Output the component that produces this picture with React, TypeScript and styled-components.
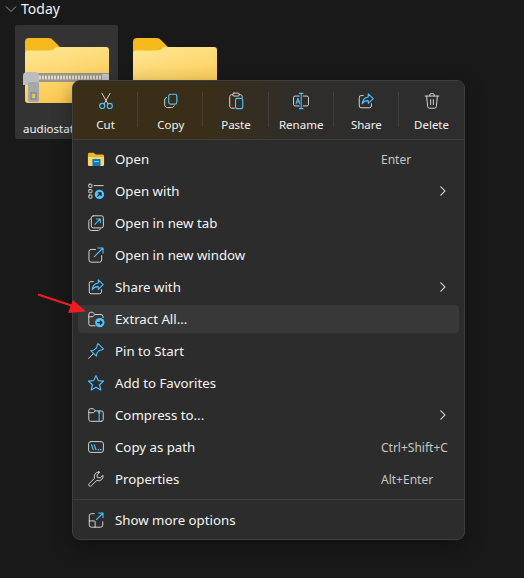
import { FC, ReactNode } from "react";
import styled, { createGlobalStyle } from "styled-components";

const GlobalStyle = createGlobalStyle`
  html, body {
    margin: 0;
    background: #191919;
    font-family: "Noto Sans", "Open Sans", sans-serif;
    overflow: hidden;
  }
`;

const BLUE = "#4cc2ff";
const GREY = "#d4d4d4";

const Ico: FC<{ children: ReactNode }> = ({ children }) => (
  <IconSvg viewBox="0 0 20 20" fill="none" stroke={GREY} strokeWidth="1.1" strokeLinecap="round" strokeLinejoin="round">
    {children}
  </IconSvg>
);

const CutIcon = () => (
  <Ico>
    <path d="M5.500 1.500 12 13M14.500 1.500 8 13" />
    <circle cx="5.800" cy="15.500" r="2.800" stroke={BLUE} strokeWidth="1.300" />
    <circle cx="14.200" cy="15.500" r="2.800" stroke={BLUE} strokeWidth="1.300" />
  </Ico>
);
const CopyIcon = () => (
  <Ico>
    <rect x="7.500" y="2.500" width="9" height="11" rx="2" stroke={BLUE} strokeWidth="1.300" />
    <path d="M5 6.200C3.800 6.500 3 7.400 3 8.700v5.600C3 16 4.200 17.300 6 17.300h4.800c1.200 0 2.200-.8 2.600-1.900" />
  </Ico>
);
const PasteIcon = () => (
  <Ico>
    <path d="M6.500 3H5.200C3.900 3 3 4 3 5.200v10.600C3 17 3.900 18 5.200 18h3" />
    <path d="M13.500 3h1.300c1.200 0 2.200 1 2.200 2.200V6" />
    <rect x="6.500" y="1.200" width="7" height="3.300" rx="1.200" />
    <rect x="9.500" y="7" width="8" height="11.500" rx="1.800" stroke={BLUE} strokeWidth="1.300" />
  </Ico>
);
const RenameIcon = () => (
  <Ico>
    <path d="M8 4.500H3.500A1.800 1.800 0 0 0 1.700 6.300v7.400a1.800 1.800 0 0 0 1.800 1.800H8M12.500 4.500h4a1.800 1.800 0 0 1 1.800 1.800v7.400a1.800 1.800 0 0 1-1.800 1.800h-4" />
    <path d="M8.200 1.500h4M8.200 18.500h4M10.200 1.500v17" stroke={BLUE} strokeWidth="1.200" />
    <path d="M4.500 13 6.600 7l2.100 6M5.200 11h2.800" stroke={BLUE} strokeWidth="1.200" />
  </Ico>
);
const ShareIcon = () => (
  <Ico>
    <path d="M7 4H4.500A2 2 0 0 0 2.500 6v9.500a2 2 0 0 0 2 2H14a2 2 0 0 0 2-2V13" />
    <path d="M12.500 2 18 7.400l-5.500 5.200V9.600C9.500 9.400 7.500 10.400 5.800 13c.3-4.200 2.600-6.800 6.700-7.400V2Z" stroke={BLUE} strokeWidth="1.200" />
  </Ico>
);
const DeleteIcon = () => (
  <Ico>
    <path d="M2.500 4.500h15M7.500 4.500V3.200A1.500 1.500 0 0 1 9 1.800h2a1.500 1.500 0 0 1 1.500 1.400v1.300" />
    <path d="M4 4.500 5.200 16.200A2 2 0 0 0 7.200 18h5.600a2 2 0 0 0 2-1.800L16 4.500" />
    <path d="M8.500 8.500v5.500M11.500 8.500v5.500" />
  </Ico>
);
const OpenIcon = () => (
  <IconSvg viewBox="0 0 20 20">
    <path d="M1 5A1.800 1.800 0 0 1 2.800 3h4.500l2.200 2h7.700A1.800 1.800 0 0 1 19 6.800V7H1Z" fill="#f5b81c" />
    <path d="M1 7h18v9a1.800 1.800 0 0 1-1.800 1.800H2.800A1.800 1.800 0 0 1 1 16Z" fill="#fcd667" />
    <rect x="6" y="10" width="9" height="7.800" rx="0.800" fill="#0f78c4" />
    <rect x="8" y="12.300" width="5" height="1.200" fill="#7fd0fb" />
  </IconSvg>
);
const OpenWithIcon = () => (
  <Ico>
    <rect x="2" y="2.500" width="3.500" height="3.500" rx="0.500" />
    <rect x="2" y="8.500" width="3.500" height="3.500" rx="0.500" />
    <rect x="2" y="14.500" width="3.500" height="3.500" rx="0.500" />
    <path d="M8 4h10" />
    <circle cx="13.800" cy="13.800" r="5.200" fill={BLUE} stroke="none" />
    <path d="M12 15.600l3.400-3.400M12.700 12h2.900v2.900" stroke="#1d1d1d" strokeWidth="1.300" />
  </Ico>
);
const NewTabIcon = () => (
  <Ico>
    <path d="M3.800 5.500C2.700 6 2 7 2 8.200v7.300A2.800 2.800 0 0 0 4.800 18.300h7.400c1.200 0 2.200-.7 2.600-1.800" />
    <rect x="4.800" y="2" width="13.400" height="13.400" rx="2.200" />
    <path d="M8.800 11.500 14.500 5.800M10.500 5.500h4.300v4.300" stroke={BLUE} strokeWidth="1.200" />
  </Ico>
);
const NewWindowIcon = () => (
  <Ico>
    <path d="M9.500 3.800H4.500A2.300 2.300 0 0 0 2.200 6.100v9.500a2.300 2.300 0 0 0 2.300 2.300H14a2.300 2.300 0 0 0 2.300-2.300v-5" />
    <path d="M8 12 17.500 2.500M12 2.200h5.800V8" stroke={BLUE} strokeWidth="1.200" />
  </Ico>
);
const ExtractIcon = () => (
  <Ico>
    <path d="M9 17.500H4.300a2.300 2.300 0 0 1-2.300-2.300V4.800a2.300 2.300 0 0 1 2.300-2.300h2.200l2.300 2.500h6.700a2.300 2.300 0 0 1 2.300 2.300v1.200" />
    <path d="M2 7.500h4.500l2.300-2.500" />
    <circle cx="14.200" cy="14" r="5.200" fill={BLUE} stroke="none" />
    <path d="M11.700 14h4.800M14.700 12l2 2-2 2" stroke="#1d1d1d" strokeWidth="1.300" />
  </Ico>
);
const PinIcon = () => (
  <Ico>
    <path d="M12.300 1.800 18.200 7.700 16.800 8.600 13.600 9.400 10.900 12.500 10.500 15.800 4.200 9.500 7.500 9.100 10.600 6.400 11.400 3.200Z" stroke={BLUE} strokeWidth="1.200" />
    <path d="M7 13 1.800 18.200" />
  </Ico>
);
const StarIcon = () => (
  <Ico>
    <path d="M10 1.800 12.500 7.300 18.400 7.900 14 11.900 15.300 17.800 10 14.800 4.700 17.800 6 11.900 1.600 7.900 7.500 7.300Z" stroke={BLUE} strokeWidth="1.300" />
  </Ico>
);
const CompressIcon = () => (
  <Ico>
    <path d="M16 17H4a2 2 0 0 1-2-2V5a2 2 0 0 1 2-2h3l2.300 2.500H16a2 2 0 0 1 2 2v7.500a2 2 0 0 1-2 2Z" />
    <path d="M2 7.500h5l2.300-2" />
    <path d="M13.500 5.500v11" stroke={BLUE} strokeWidth="1.300" strokeDasharray="1.500 1" />
    <rect x="12.400" y="5.500" width="2.200" height="3" fill={BLUE} stroke="none" />
  </Ico>
);
const PathIcon = () => (
  <Ico>
    <rect x="1.800" y="4" width="16.400" height="12" rx="2.500" />
    <path d="M5 7.500 7 13M8 7.500 10 13" stroke={BLUE} strokeWidth="1.300" />
    <path d="M12.500 13h.6M15 13h.6" stroke={BLUE} strokeWidth="1.400" />
  </Ico>
);
const WrenchIcon = () => (
  <Ico>
    <path d="M12.800 2.200a5 5 0 0 0-4.400 7L2.400 15.200a1.700 1.700 0 0 0 0 2.400 1.700 1.700 0 0 0 2.400 0l6-6a5 5 0 0 0 6.900-5.800L14.600 8.900 11.500 8.400 11.100 5.400 14.200 2.400a5 5 0 0 0-1.400-.2Z" />
  </Ico>
);
const MoreIcon = () => (
  <Ico>
    <path d="M8 3H4.800A2.300 2.300 0 0 0 2.500 5.300v10.400A2.300 2.300 0 0 0 4.800 18h10.400a2.300 2.300 0 0 0 2.300-2.300V12" />
    <path d="M2.500 11h5.700c.5 0 .8.300.8.800V18" />
    <path d="M10.500 9.500 17.500 2.500M13 2.300h4.800v4.800" stroke={BLUE} strokeWidth="1.200" />
  </Ico>
);

const FolderArt: FC<{ id: string; zipped?: boolean }> = ({ id, zipped }) => (
  <FolderSvg width="84" height="67" viewBox="0 0 84 67">
    <defs>
      <linearGradient id={id} x1="0" y1="0" x2="0.350" y2="1">
        <stop offset="0" stopColor="#ffe795" />
        <stop offset="1" stopColor="#fcc94f" />
      </linearGradient>
    </defs>
    <path d="M0 4a4 4 0 0 1 4-4h19c2.500 0 4 .8 5.500 2.500L36 10v6H0Z" fill="#f6b91d" />
    <path d="M0 16.500c0-2.500 1-4 3-4h21c2.500 0 4-.7 5.500-2.200L31 9h50a3 3 0 0 1 3 3v50a3 3 0 0 1-3 3H3a3 3 0 0 1-3-3Z" fill={`url(#${id})`} />
    {zipped && (
      <>
        <rect x="6" y="35" width="78" height="9" fill="#9b968a" />
        <path d="M14 39.500H78" stroke="#dcd8cb" strokeWidth="4" strokeDasharray="2 1" />
        <rect x="77" y="36" width="7" height="7" rx="1" fill="#c6c6c6" />
        <path d="M-2 38a4 4 0 0 1 4-4h8a4 4 0 0 1 4 4v9H-2Z" fill="#bcbcbc" />
        <rect x="3" y="44" width="11" height="20" rx="2" fill="#a8a8a8" />
        <rect x="6" y="55" width="5" height="6" fill="#d9c27a" stroke="#6f6a5c" strokeWidth="0.800" />
      </>
    )}
  </FolderSvg>
);

const tools = [
  { label: "Cut", icon: <CutIcon /> },
  { label: "Copy", icon: <CopyIcon /> },
  { label: "Paste", icon: <PasteIcon /> },
  { label: "Rename", icon: <RenameIcon /> },
  { label: "Share", icon: <ShareIcon /> },
  { label: "Delete", icon: <DeleteIcon /> },
];

const items: { label: string; icon: ReactNode; shortcut?: string; submenu?: boolean; active?: boolean }[] = [
  { label: "Open", icon: <OpenIcon />, shortcut: "Enter" },
  { label: "Open with", icon: <OpenWithIcon />, submenu: true },
  { label: "Open in new tab", icon: <NewTabIcon /> },
  { label: "Open in new window", icon: <NewWindowIcon /> },
  { label: "Share with", icon: <ShareIcon />, submenu: true },
  { label: "Extract All...", icon: <ExtractIcon />, active: true },
  { label: "Pin to Start", icon: <PinIcon /> },
  { label: "Add to Favorites", icon: <StarIcon /> },
  { label: "Compress to...", icon: <CompressIcon />, submenu: true },
  { label: "Copy as path", icon: <PathIcon />, shortcut: "Ctrl+Shift+C" },
  { label: "Properties", icon: <WrenchIcon />, shortcut: "Alt+Enter" },
];

const Row: FC<{ label: string; icon: ReactNode; shortcut?: string; submenu?: boolean; active?: boolean }> = ({
  label,
  icon,
  shortcut,
  submenu,
  active,
}) => (
  <RowBox $active={active}>
    <RowIcon>{icon}</RowIcon>
    <RowLabel>{label}</RowLabel>
    {shortcut && <Shortcut>{shortcut}</Shortcut>}
    {submenu && (
      <Chevron width="10" height="12" viewBox="0 0 10 12" fill="none" stroke="#c8c8c8" strokeWidth="1.100">
        <path d="M2.500 1.500 7 6l-4.500 4.500" />
      </Chevron>
    )}
  </RowBox>
);

export default function App() {
  return (
    <Page>
      <GlobalStyle />
      <SectionHeader>
        <svg width="12" height="8" viewBox="0 0 12 8" fill="none" stroke="#9a9a9a" strokeWidth="1">
          <path d="M1 1.500 6 6.500l5-5" />
        </svg>
        <SectionTitle>Today</SectionTitle>
      </SectionHeader>
      <Tiles>
        <Tile $selected>
          <FolderArt id="zipFolder" zipped />
          <TileLabel>audiostat</TileLabel>
        </Tile>
        <Tile>
          <FolderArt id="plainFolder" />
        </Tile>
      </Tiles>

      <Menu>
        <Toolbar>
          {tools.map((tool) => (
            <Tool key={tool.label}>
              {tool.icon}
              <ToolLabel>{tool.label}</ToolLabel>
            </Tool>
          ))}
        </Toolbar>
        <List>
          {items.map((item) => (
            <Row key={item.label} {...item} />
          ))}
          <Separator />
          <Row label="Show more options" icon={<MoreIcon />} />
        </List>
      </Menu>

      <Arrow width="50" height="22" viewBox="0 0 50 22">
        <path d="M1 1.500 36 13" stroke="#ee1c25" strokeWidth="2.200" />
        <path d="M49 18.500 31 20 36 7Z" fill="#ee1c25" />
      </Arrow>
    </Page>
  );
}

const IconSvg = styled.svg`
  display: block;
  width: 18px;
  height: 18px;
  margin: 1px;
  flex: none;
`;

const FolderSvg = styled.svg`
  display: block;
  flex: none;
  overflow: visible;
`;

const Page = styled.div`
  position: relative;
  width: 524px;
  height: 578px;
  overflow: hidden;
  background: #191919;
  color: #fff;
`;

const SectionHeader = styled.div`
  display: flex;
  align-items: center;
  gap: 4px;
  height: 17px;
  padding-left: 5px;
`;

const SectionTitle = styled.span`
  font-size: 14px;
  line-height: 17px;
  color: #f2f2f2;
`;

const Tiles = styled.div`
  display: flex;
  gap: 5px;
  padding: 8px 0 0 15px;
`;

const Tile = styled.div<{ $selected?: boolean }>`
  display: flex;
  flex-direction: column;
  align-items: center;
  box-sizing: border-box;
  width: 103px;
  height: 114px;
  padding-top: 13px;
  border-radius: 2px;
  background: ${({ $selected }) => ($selected ? "#333333" : "transparent")};
`;

const TileLabel = styled.span`
  align-self: flex-start;
  margin: 16px 0 0 8px;
  font-size: 11.500px;
  line-height: 16px;
  color: #f4f4f4;
`;

const Menu = styled.div`
  position: absolute;
  left: 72px;
  top: 80px;
  box-sizing: border-box;
  width: 393px;
  height: 460px;
  overflow: hidden;
  border: 1px solid #3f3f3f;
  border-radius: 8px;
  background: #2c2c2c;
  box-shadow: 0 6px 20px rgba(0, 0, 0, 0.35);
`;

const Toolbar = styled.div`
  display: grid;
  grid-template-columns: repeat(6, 65.200px);
  height: 58px;
  border-bottom: 1px solid #3e3e3e;
  background: linear-gradient(90deg, #3a2e18 0, #3a2e18 130px, #2f2d29 220px, #2d2d2d 290px);
`;

const Tool = styled.div`
  position: relative;
  display: flex;
  flex-direction: column;
  align-items: center;
  gap: 6px;
  padding-top: 10px;

  &:not(:last-child)::after {
    content: "";
    position: absolute;
    right: 0;
    top: 11px;
    height: 35px;
    width: 1px;
    background: rgba(255, 255, 255, 0.09);
  }
`;

const ToolLabel = styled.span`
  font-size: 11.500px;
  line-height: 16px;
  color: #f2f2f2;
`;

const List = styled.div`
  display: flex;
  flex-direction: column;
  gap: 4px;
  padding: 5px 5px 0 5px;
`;

const RowBox = styled.div<{ $active?: boolean }>`
  display: flex;
  align-items: center;
  height: 28px;
  padding: 0 10px 0 8px;
  border-radius: 4px;
  background: ${({ $active }) => ($active ? "#383838" : "transparent")};
`;

const RowIcon = styled.span`
  display: flex;
  width: 20px;
  height: 20px;
  margin-right: 9px;
`;

const RowLabel = styled.span`
  flex: 1;
  font-size: 13.250px;
  color: #f4f4f4;
`;

const Shortcut = styled.span`
  width: 68px;
  font-size: 12px;
  white-space: nowrap;
  color: #c6c6c6;
`;

const Chevron = styled.svg`
  margin-right: 1px;
`;

const Separator = styled.div`
  height: 1px;
  margin: 2px -5px 2px;
  background: #3e3e3e;
`;

const Arrow = styled.svg`
  position: absolute;
  left: 37px;
  top: 293px;
`;
